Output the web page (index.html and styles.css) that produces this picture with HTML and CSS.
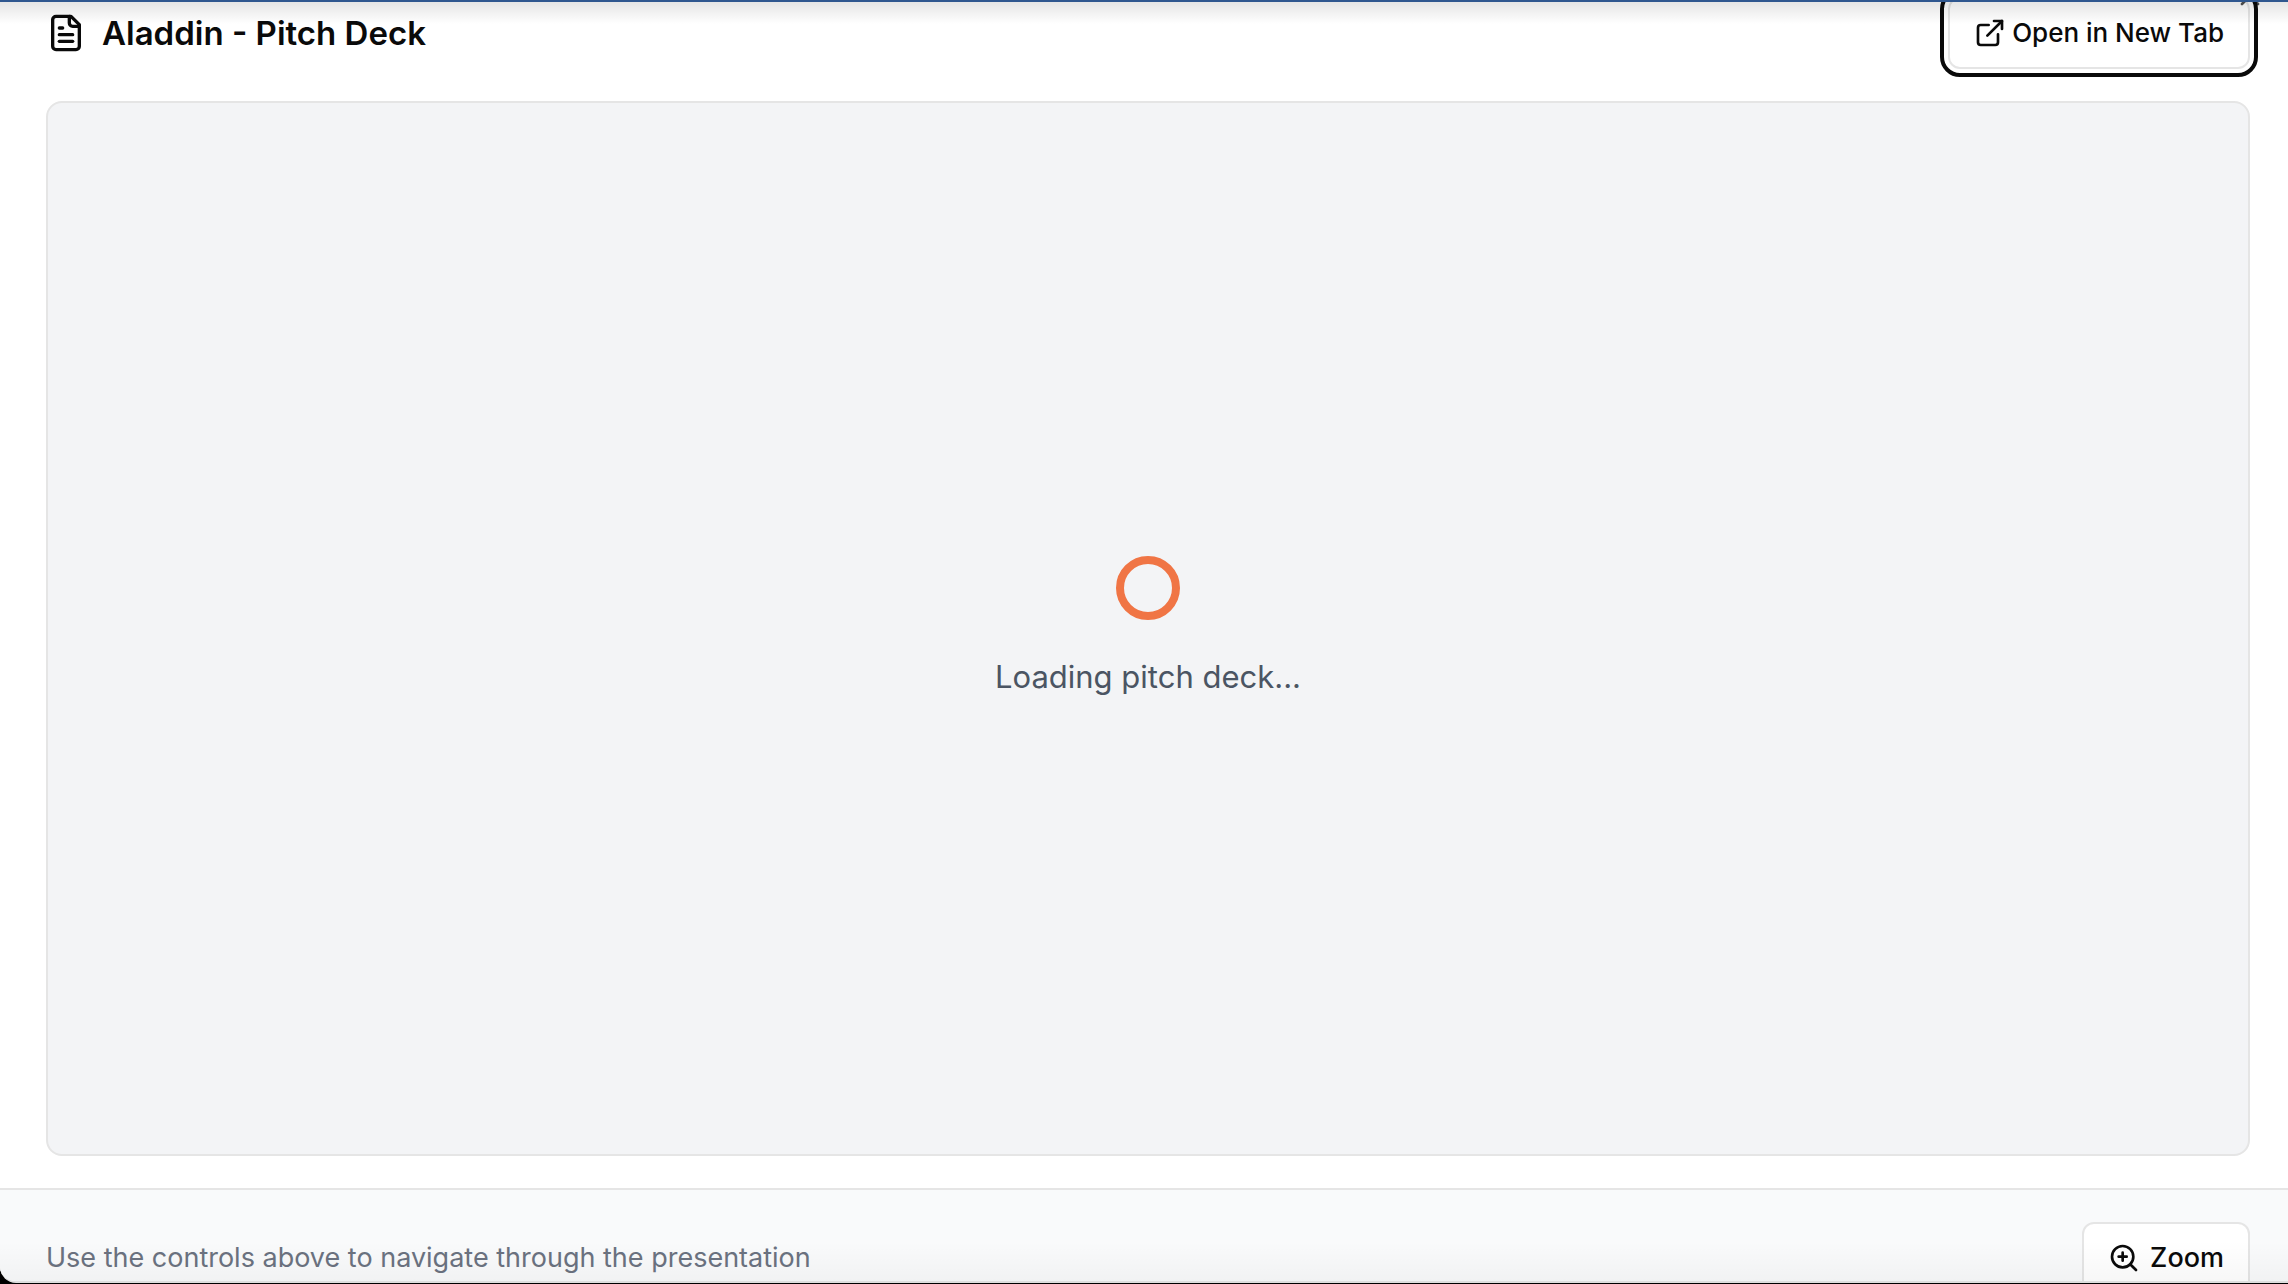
FILE: index.html
```html
<!DOCTYPE html>
<html lang="en">
<head>
<meta charset="utf-8">
<meta name="viewport" content="width=device-width, initial-scale=1">
<title>Aladdin - Pitch Deck</title>
<link rel="stylesheet" href="styles.css">
</head>
<body>
<div class="dialog" role="dialog" aria-labelledby="deck-title">
  <header class="header">
    <div class="heading">
      <svg class="icon icon-large" viewBox="0 0 24 24" aria-hidden="true"><path d="M15 2H6a2 2 0 0 0-2 2v16a2 2 0 0 0 2 2h12a2 2 0 0 0 2-2V7Z"/><path d="M14 2v4a2 2 0 0 0 2 2h4"/><path d="M10 9H8"/><path d="M16 13H8"/><path d="M16 17H8"/></svg>
      <h1 class="title" id="deck-title">Aladdin - Pitch Deck</h1>
    </div>
    <button class="button button-focused" type="button">
      <svg class="icon" viewBox="0 0 24 24" aria-hidden="true"><path d="M15 3h6v6"/><path d="M10 14 21 3"/><path d="M18 13v6a2 2 0 0 1-2 2H5a2 2 0 0 1-2-2V8a2 2 0 0 1 2-2h6"/></svg>
      Open in New Tab
    </button>
  </header>
  <main class="viewer">
    <div class="loading" role="status">
      <div class="spinner"></div>
      <p class="loading-text">Loading pitch deck...</p>
    </div>
  </main>
  <footer class="footer">
    <p class="hint">Use the controls above to navigate through the presentation</p>
    <button class="button" type="button">
      <svg class="icon" viewBox="0 0 24 24" aria-hidden="true"><circle cx="11" cy="11" r="8"/><path d="m21 21-4.35-4.35"/><path d="M11 8v6"/><path d="M8 11h6"/></svg>
      Zoom
    </button>
  </footer>
  <button class="close" type="button" aria-label="Close">
    <svg class="icon" viewBox="0 0 24 24" aria-hidden="true"><path d="M18 6 6 18"/><path d="m6 6 12 12"/></svg>
  </button>
</div>
</body>
</html>
```
FILE: styles.css
```css
* {
  box-sizing: border-box;
}

body {
  margin: 0;
  background: #000;
  color: #0a0a0a;
  font-family: Inter, "Liberation Sans", sans-serif;
}

h1,
p {
  margin: 0;
}

.dialog {
  position: relative;
  display: flex;
  flex-direction: column;
  height: calc(100vh - 1px);
  overflow: hidden;
  border-top: 2px solid #2f578f;
  border-bottom: 2px solid #dedede;
  border-bottom-left-radius: 16px;
  background: #fff;
}

/* Soft shading along the clipped top and bottom edges */
.dialog::after {
  content: "";
  position: absolute;
  inset: 0;
  pointer-events: none;
  background:
    linear-gradient(rgba(0, 0, 0, 0.1), transparent) top / 100% 22px no-repeat,
    linear-gradient(transparent, rgba(0, 0, 0, 0.03)) bottom / 100% 40px no-repeat;
}

.header {
  display: flex;
  flex: none;
  align-items: center;
  justify-content: space-between;
  height: 62px;
  padding: 0 38px 0 46px;
}

.heading {
  display: flex;
  align-items: center;
  gap: 16px;
}

.title {
  font-size: 33px;
  font-weight: 600;
  line-height: 40px;
}

.icon {
  display: block;
  flex: none;
  width: 32px;
  height: 32px;
  fill: none;
  stroke: currentColor;
  stroke-width: 2;
  stroke-linecap: round;
  stroke-linejoin: round;
}

.icon-large {
  width: 40px;
  height: 40px;
}

.button {
  display: flex;
  flex: none;
  align-items: center;
  gap: 10px;
  height: 72px;
  padding: 0 24px;
  border: 2px solid #e5e5e5;
  border-radius: 12px;
  background: #fff;
  color: inherit;
  font: 500 27px/40px Inter, "Liberation Sans", sans-serif;
}

.button-focused {
  gap: 6px;
  outline: 4px solid #0a0a0a;
  outline-offset: 4px;
  font-size: 26px;
}

.viewer {
  display: flex;
  flex: 1;
  align-items: center;
  justify-content: center;
  margin: 37px 38px 32px 46px;
  border: 2px solid #e5e5e5;
  border-radius: 16px;
  background: #f3f4f6;
}

.loading {
  display: flex;
  flex-direction: column;
  align-items: center;
  gap: 33px;
}

.spinner {
  width: 64px;
  height: 64px;
  border: 8px solid #f07545;
  border-radius: 50%;
}

.loading-text {
  color: #4b5563;
  font-size: 31px;
  line-height: 48px;
}

.footer {
  display: flex;
  flex: none;
  align-items: flex-start;
  justify-content: space-between;
  height: 93px;
  padding: 32px 38px 0 46px;
  border-top: 2px solid #e5e5e5;
  background: #f9fafb;
}

.hint {
  color: #6b7280;
  font-size: 27px;
  line-height: 72px;
}

.close {
  position: absolute;
  top: -22px;
  right: 22px;
  padding: 0;
  border: 0;
  background: none;
  color: #0a0a0a;
  opacity: 0.7;
}
```
